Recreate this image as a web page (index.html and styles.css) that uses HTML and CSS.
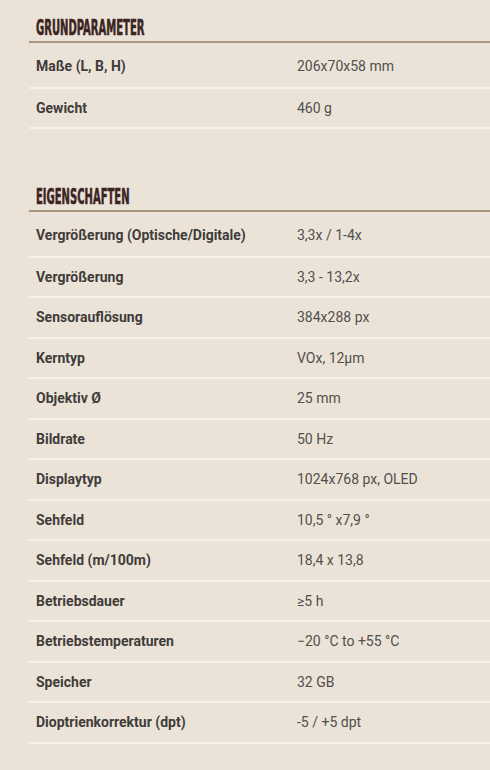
FILE: index.html
```html
<!DOCTYPE html>
<html lang="de">
<head>
<meta charset="utf-8">
<link rel="stylesheet" href="styles.css">
</head>
<body>
<section class="spec">
  <h2 class="spec-title"><span>Grundparameter</span></h2>
  <div class="spec-rows">
    <div class="row"><div class="label">Maße (L, B, H)</div><div class="value">206x70x58 mm</div></div>
    <div class="row"><div class="label">Gewicht</div><div class="value">460 g</div></div>
  </div>
</section>
<section class="spec spec-next">
  <h2 class="spec-title"><span>Eigenschaften</span></h2>
  <div class="spec-rows">
    <div class="row"><div class="label">Vergrößerung (Optische/Digitale)</div><div class="value">3,3x / 1-4x</div></div>
    <div class="row"><div class="label">Vergrößerung</div><div class="value">3,3 - 13,2x</div></div>
    <div class="row"><div class="label">Sensorauflösung</div><div class="value">384x288 px</div></div>
    <div class="row"><div class="label">Kerntyp</div><div class="value">VOx, 12µm</div></div>
    <div class="row"><div class="label">Objektiv Ø</div><div class="value">25 mm</div></div>
    <div class="row"><div class="label">Bildrate</div><div class="value">50 Hz</div></div>
    <div class="row"><div class="label">Displaytyp</div><div class="value">1024x768 px, OLED</div></div>
    <div class="row"><div class="label">Sehfeld</div><div class="value">10,5 ° x7,9 °</div></div>
    <div class="row"><div class="label">Sehfeld (m/100m)</div><div class="value">18,4 x 13,8</div></div>
    <div class="row"><div class="label">Betriebsdauer</div><div class="value">≥5 h</div></div>
    <div class="row"><div class="label">Betriebstemperaturen</div><div class="value">−20 °C to +55 °C</div></div>
    <div class="row"><div class="label">Speicher</div><div class="value">32 GB</div></div>
    <div class="row"><div class="label">Dioptrienkorrektur (dpt)</div><div class="value">-5 / +5 dpt</div></div>
  </div>
</section>
</body>
</html>
```

FILE: styles.css
```css
html, body {
  margin: 0;
  padding: 0;
}
body {
  background: #ebe3d8;
  font-family: Roboto, "Noto Sans", sans-serif;
  overflow: hidden;
}
.spec {
  margin-left: 29px;
}
.spec-next {
  margin-top: 40px;
}
.spec-title {
  margin: 0;
  padding: 17px 7px 0;
  height: 24px;
  border-bottom: 2px solid #a9967c;
  font-family: "DejaVu Sans Condensed", "DejaVu Sans", sans-serif;
  font-stretch: condensed;
  font-weight: bold;
  font-size: 21px;
  line-height: 22px;
  color: #3b2522;
  text-transform: uppercase;
  white-space: nowrap;
}
.spec-title span {
  display: inline-block;
  transform: scaleX(0.53);
  transform-origin: left center;
  -webkit-text-stroke: 0.6px #3b2522;
}
.spec-rows {
  padding-top: 2px;
}
.row {
  display: flex;
  align-items: center;
  box-sizing: border-box;
  height: 40.5px;
  border-bottom: 2px solid #f4f0ea;
  font-size: 14px;
  line-height: 18px;
}
.row:first-child {
  height: 43.5px;
}
.label {
  flex: 0 0 268px;
  box-sizing: border-box;
  padding-left: 7px;
  font-weight: bold;
  color: #3f3c3a;
  white-space: nowrap;
}
.value {
  flex: 1 1 auto;
  color: #51504d;
  white-space: nowrap;
}
```
